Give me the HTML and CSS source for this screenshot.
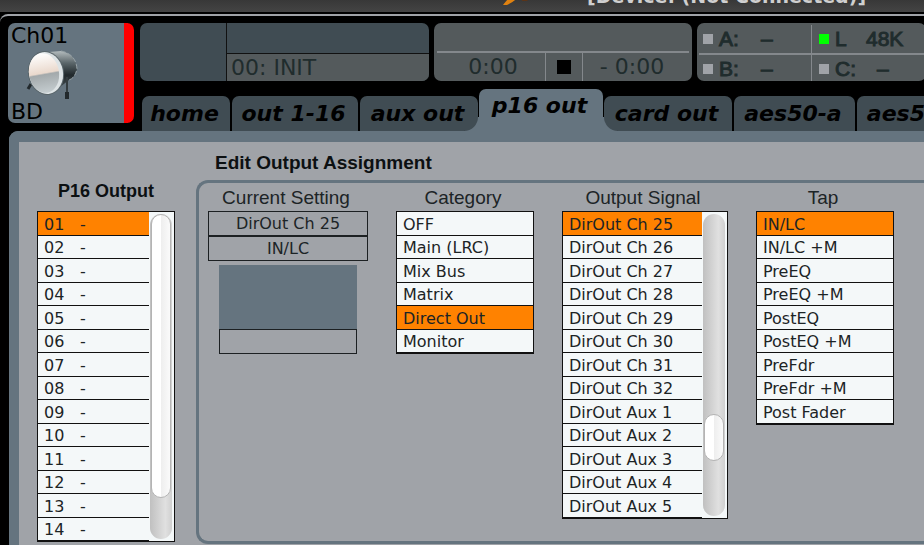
FILE: index.html
```html
<!DOCTYPE html>
<html lang="en">
<head>
  <meta charset="UTF-8" />
  <meta name="viewport" content="width=device-width, initial-scale=1.0"/>
  <title>P16 Output Assignment</title>
  <link rel="stylesheet" href="styles.css">
</head>
<body>

  <div class="titlebar">
    <svg class="logo" width="87" height="12" viewBox="0 0 87 12">
      <path d="M3 5 Q6 1 10 -3 L18 -3 Q14 2 7 5 Z" fill="#e08210"/>
      <path d="M22 -2 H30 L27 1 H22 Z" fill="#5a3418"/>
    </svg>
    <span>[Device: (Not Connected)]</span>
  </div>

  <div class="frame">
    <div class="top">
      <button type="button" class="channel">
        <span>Ch01</span>
        <svg width="56" height="52" viewBox="0 0 56 52">
          <defs>
            <linearGradient id="shell" x1="0" y1="0" x2="0" y2="1">
              <stop offset="0" stop-color="#b4bcbe"/>
              <stop offset=".3" stop-color="#5b666a"/>
              <stop offset=".6" stop-color="#20282b"/>
              <stop offset="1" stop-color="#4d575a"/>
            </linearGradient>
            <linearGradient id="skin" x1="0" y1="0" x2="0" y2="1">
              <stop offset="0" stop-color="#ffffff"/>
              <stop offset=".5" stop-color="#ead9cd"/>
              <stop offset=".54" stop-color="#a3a9ab"/>
              <stop offset="1" stop-color="#c5cdd0"/>
            </linearGradient>
          </defs>
          <path d="M24 3 L36 2 Q51 5 52 20 Q50 29 44 31 L30 42 Z" fill="url(#shell)"/>
          <path d="M36 2 Q51 5 52 20 Q50 29 44 31" fill="none" stroke="#98a3a7" stroke-width="1" stroke-dasharray="5 2"/>
          <path d="M6 35 L3 40" stroke="#22292c" stroke-width="3"/>
          <path d="M42 28 V49" stroke="#343c3f" stroke-width="2"/>
          <path d="M42 43 V50" stroke="#22292c" stroke-width="4"/>
          <ellipse cx="21" cy="24" rx="18" ry="22" transform="rotate(-10 21 24)" fill="#59656a"/>
          <ellipse cx="21" cy="24" rx="17" ry="21" transform="rotate(-10 21 24)" fill="#dde3e5"/>
          <ellipse cx="19" cy="24" rx="15" ry="20" transform="rotate(-10 19 24)" fill="url(#skin)"/>
        </svg>
        <span>BD</span>
      </button>

      <div class="right">
        <div class="displays">
          <div class="display scene">
            <div></div>
            <div class="scene-name">00: INIT</div>
          </div>
          <div class="display timer">
            <div class="line"></div>
            <div class="times">
              <span>0:00</span>
              <span class="stop"><i></i></span>
              <span>- 0:00</span>
            </div>
          </div>
          <div class="display status">
            <div><i></i><b>A:</b><span>–</span></div>
            <div><i class="on"></i><b>L</b><span>48K</span></div>
            <div><i></i><b>B:</b><span>–</span></div>
            <div><i></i><b>C:</b><span>–</span></div>
          </div>
        </div>

        <nav class="tabs">
          <button type="button" class="w-home">home</button>
          <button type="button" class="w-out">out 1-16</button>
          <button type="button" class="w-aux before">aux out</button>
          <button type="button" class="w-p16 active">p16 out</button>
          <button type="button" class="w-card after">card out</button>
          <button type="button" class="w-aes">aes50-a</button>
          <button type="button" class="w-aes">aes50-b</button>
        </nav>
      </div>
    </div>

    <div class="panel">
      <section class="p16">
        <h3>P16 Output</h3>
        <div class="list">
          <ul>
            <li><button type="button" class="selected"><span>01</span>-</button></li>
            <li><button type="button"><span>02</span>-</button></li>
            <li><button type="button"><span>03</span>-</button></li>
            <li><button type="button"><span>04</span>-</button></li>
            <li><button type="button"><span>05</span>-</button></li>
            <li><button type="button"><span>06</span>-</button></li>
            <li><button type="button"><span>07</span>-</button></li>
            <li><button type="button"><span>08</span>-</button></li>
            <li><button type="button"><span>09</span>-</button></li>
            <li><button type="button"><span>10</span>-</button></li>
            <li><button type="button"><span>11</span>-</button></li>
            <li><button type="button"><span>12</span>-</button></li>
            <li><button type="button"><span>13</span>-</button></li>
            <li><button type="button"><span>14</span>-</button></li>
          </ul>
          <div class="scroll"><div class="thumb long"></div></div>
        </div>
      </section>

      <section class="edit">
        <h2>Edit Output Assignment</h2>
        <div class="group">
          <div class="current">
            <h4>Current Setting</h4>
            <div class="value">DirOut Ch 25</div>
            <div class="value">IN/LC</div>
            <div class="preview"></div>
            <div class="preview-name"></div>
          </div>

          <div class="category">
            <h4>Category</h4>
            <div class="list">
              <ul>
                <li><button type="button">OFF</button></li>
                <li><button type="button">Main (LRC)</button></li>
                <li><button type="button">Mix Bus</button></li>
                <li><button type="button">Matrix</button></li>
                <li><button type="button" class="selected">Direct Out</button></li>
                <li><button type="button">Monitor</button></li>
              </ul>
            </div>
          </div>

          <div class="signal">
            <h4>Output Signal</h4>
            <div class="list">
              <ul>
                <li><button type="button" class="selected">DirOut Ch 25</button></li>
                <li><button type="button">DirOut Ch 26</button></li>
                <li><button type="button">DirOut Ch 27</button></li>
                <li><button type="button">DirOut Ch 28</button></li>
                <li><button type="button">DirOut Ch 29</button></li>
                <li><button type="button">DirOut Ch 30</button></li>
                <li><button type="button">DirOut Ch 31</button></li>
                <li><button type="button">DirOut Ch 32</button></li>
                <li><button type="button">DirOut Aux 1</button></li>
                <li><button type="button">DirOut Aux 2</button></li>
                <li><button type="button">DirOut Aux 3</button></li>
                <li><button type="button">DirOut Aux 4</button></li>
                <li><button type="button">DirOut Aux 5</button></li>
              </ul>
              <div class="scroll"><div class="thumb short"></div></div>
            </div>
          </div>

          <div class="tap">
            <h4>Tap</h4>
            <div class="list">
              <ul>
                <li><button type="button" class="selected">IN/LC</button></li>
                <li><button type="button">IN/LC +M</button></li>
                <li><button type="button">PreEQ</button></li>
                <li><button type="button">PreEQ +M</button></li>
                <li><button type="button">PostEQ</button></li>
                <li><button type="button">PostEQ +M</button></li>
                <li><button type="button">PreFdr</button></li>
                <li><button type="button">PreFdr +M</button></li>
                <li><button type="button">Post Fader</button></li>
              </ul>
            </div>
          </div>
        </div>
      </section>
    </div>
  </div>

</body>
</html>
```
FILE: styles.css
```css
* {
  box-sizing: border-box;
}
html {
  overflow: hidden;
}
body {
  margin: 0;
  background-color: #000;
  color: #1c2426;
  font-family: "DejaVu Sans", Verdana, sans-serif;
  font-size: 16px;
}
button {
  border: none;
  margin: 0;
  padding: 0;
  background: none;
  color: inherit;
  font: inherit;
  text-align: left;
  cursor: pointer;
}
h2, h3, h4, ul {
  margin: 0;
  padding: 0;
}

/* title bar */
.titlebar {
  display: flex;
  align-items: flex-end;
  height: 12px;
  padding-left: 500px;
  overflow: hidden;
  background: linear-gradient(#383838, #444);
  color: #cfcfcf;
  font-size: 19px;
  font-weight: bold;
  line-height: 32px;
  white-space: nowrap;
}
.logo {
  flex: none;
}

.frame {
  margin-top: 2px;
  padding-top: 7px;
  border-top: 2px solid #a0a3a8;
  border-top-left-radius: 8px;
}
.top {
  display: flex;
  gap: 6px;
  padding-left: 8px;
}

/* channel strip */
.channel {
  display: flex;
  flex-direction: column;
  justify-content: space-between;
  flex: none;
  width: 126px;
  height: 100px;
  margin-bottom: 8px;
  padding-left: 3px;
  border-right: 10px solid #f00;
  border-radius: 7px;
  background-color: #65747f;
  color: #000;
  font-size: 22px;
  line-height: 25px;
}
.channel svg {
  flex: none;
  margin-left: 14px;
}
.channel span:last-child {
  line-height: 22px;
}

.right {
  display: flex;
  flex-direction: column;
  justify-content: space-between;
  flex: 1;
  min-width: 0;
}

/* displays */
.displays {
  display: flex;
  gap: 5px;
}
.display {
  flex: none;
  height: 58px;
  overflow: hidden;
  border-radius: 7px;
  background-color: #545a5c;
  color: #202c2d;
  font-size: 22px;
  line-height: 28px;
}
.scene {
  display: grid;
  grid-template-rows: 29px 28px;
  row-gap: 1px;
  width: 289px;
  padding-left: 87px;
  background: linear-gradient(#111, #111) 86px 0 / 1px 100% no-repeat, #404c53;
}
.scene-name {
  grid-row: 2;
  padding-left: 4px;
  border-top: 1px solid #111;
  background-color: #545a5c;
}
.timer {
  width: 258px;
  padding: 0 3px;
}
.timer .line {
  height: 30px;
  border-bottom: 2px solid #84888c;
}
.times {
  display: grid;
  grid-template-columns: 108px 38px 1fr;
  height: 25px;
  text-align: center;
}
.times span:first-child {
  padding-left: 4px;
}
.times span:last-child {
  padding-right: 8px;
}
.times .stop {
  display: flex;
  align-items: center;
  justify-content: center;
  border: solid #84888c;
  border-width: 0 1px;
}
.stop i {
  width: 14px;
  height: 14px;
  background-color: #000;
}
.status {
  display: grid;
  grid-template-columns: 113px 113px;
  grid-template-rows: 1fr 1fr;
  width: 229px;
  padding: 2px;
  font-family: "Liberation Sans", Arial, sans-serif;
  font-size: 21px;
}
.status div {
  display: grid;
  grid-template-columns: 10px 36px 1fr;
  column-gap: 6px;
  align-items: center;
  padding-left: 4px;
}
.status b {
  font-weight: normal;
  -webkit-text-stroke: 1px #202c2d;
}
.status span {
  -webkit-text-stroke: 1px #202c2d;
}
.status div:nth-child(odd) {
  border-right: 1px solid #84888c;
}
.status div:nth-child(even) {
  padding-left: 7px;
}
.status div:nth-child(-n+2) {
  border-bottom: 2px solid #84888c;
}
.status i {
  width: 10px;
  height: 10px;
  background-color: #a0a3a8;
}
.status i.on {
  background-color: #0f0;
}
.status div:nth-child(2) {
  grid-template-columns: 10px 25px 1fr;
}

/* tabs */
.tabs {
  display: flex;
  align-items: flex-end;
  gap: 2px;
  height: 42px;
  padding-left: 2px;
  overflow: hidden;
  isolation: isolate;
}
.tabs button {
  flex: none;
  height: 35px;
  padding-right: 3px;
  border-radius: 7px 7px 0 0;
  background-color: #404c53;
  color: #000;
  font-size: 22px;
  font-weight: bold;
  font-style: oblique;
  line-height: 34px;
  text-align: center;
  white-space: nowrap;
}
.tabs .active {
  position: relative;
  height: 42px;
  margin: 0 -1px;
  padding-bottom: 8px;
  background-color: #65747f;
}
.tabs .active::before {
  content: "";
  position: absolute;
  left: -14px;
  right: -14px;
  bottom: 0;
  height: 14px;
  background-color: #65747f;
  z-index: -1;
}
.tabs .before {
  border-bottom-right-radius: 14px;
}
.tabs .after {
  border-bottom-left-radius: 14px;
}
.w-home { width: 88px; }
.w-out { width: 126px; }
.w-aux { width: 118px; }
.w-p16 { width: 124px; }
.w-card { width: 128px; }
.w-aes { width: 121px; }

/* main panel */
.panel {
  display: flex;
  gap: 21px;
  min-height: 440px;
  margin-left: 9px;
  padding-left: 18px;
  border-left: 10px solid #65747f;
  border-top: 11px solid #65747f;
  border-top-left-radius: 9px;
  background-color: #a0a3a8;
}
h2, h3, h4 {
  font-family: "Liberation Sans", Arial, sans-serif;
  font-size: 19px;
  line-height: 24px;
  white-space: nowrap;
}
h2, h3 {
  color: #0c1012;
}
h3 {
  margin-bottom: 8px;
  font-size: 18px;
  text-align: center;
}
h4 {
  margin-bottom: 1px;
  padding-right: 4px;
  font-weight: normal;
  text-align: center;
}
.p16 {
  flex: none;
  width: 138px;
  padding-top: 37px;
}
.edit {
  flex: 1;
  min-width: 0;
  padding-top: 9px;
}
.edit h2 {
  margin: 0 0 5px 19px;
}
.group {
  display: flex;
  align-items: flex-start;
  gap: 28px;
  height: 364px;
  padding: 3px 9px;
  border: 3px solid #65747f;
  border-right: none;
  border-radius: 12px 0 0 12px;
}
.current { flex: none; width: 160px; }
.category, .tap { flex: none; width: 138px; }
.signal { flex: none; width: 166px; }

.value {
  height: 25px;
  border: 1px solid #1c2022;
  line-height: 23px;
  text-align: center;
}
.preview {
  height: 64px;
  margin: 4px 11px 0;
  background-color: #65747f;
}
.preview-name {
  height: 25px;
  margin: 0 11px;
  border: 1px solid #1c2022;
}

/* lists */
.list {
  display: flex;
  border: 1px solid #111;
  background-color: #f4f8f9;
}
.list ul {
  flex: 1;
  list-style: none;
}
.list li {
  height: 23px;
  border-bottom: 1px solid #111;
}
.list li:nth-child(odd) {
  height: 24px;
}
.list button {
  display: block;
  width: 100%;
  height: 100%;
  padding: 2px 0 0 6px;
  line-height: 20px;
  white-space: nowrap;
}
.list button span {
  display: inline-block;
  width: 36px;
}
.list .selected {
  background-color: #ff8200;
}

/* scroll bars */
.scroll {
  display: flex;
  flex-direction: column;
  width: 22px;
  margin: 2px 2px 2px 1px;
  border-radius: 11px;
  background: linear-gradient(to right, #c0c0c0, #e0e0e0 70%, #d0d0d0);
}
.thumb {
  margin: 0 1px;
  border: 1px solid #b4b4b4;
  border-radius: 10px;
  background: linear-gradient(to right, #fff 50%, #eee 50%, #fafafa);
}
.long {
  height: 284px;
}
.short {
  height: 47px;
  margin-top: 200px;
}
```
